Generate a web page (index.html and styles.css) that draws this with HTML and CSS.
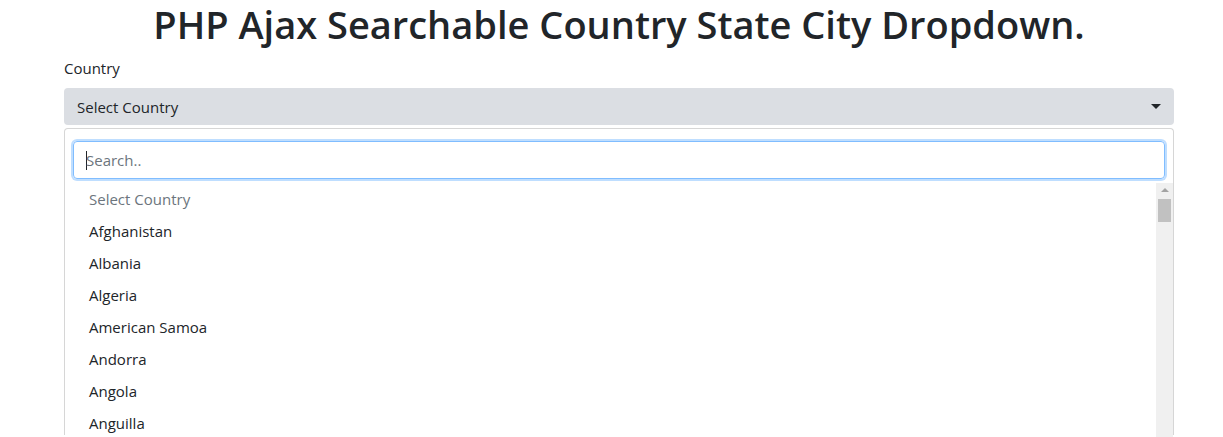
FILE: index.html
```html
<!DOCTYPE html>
<html lang="en">
<head>
<meta charset="utf-8">
<title>PHP Ajax Searchable Country State City Dropdown</title>
<link rel="stylesheet" href="styles.css">
</head>
<body>
<div class="container">
  <h1 class="title">PHP Ajax Searchable Country State City Dropdown.</h1>
  <div class="form-group">
    <label class="label">Country</label>
    <div class="select">
      <span class="select-text">Select Country</span>
      <span class="caret"></span>
    </div>
    <div class="panel">
      <div class="search-wrap">
        <div class="search"><span class="cursor"></span><span class="placeholder">Search..</span></div>
      </div>
      <div class="list-wrap">
        <ul class="list">
          <li class="item muted">Select Country</li>
          <li class="item">Afghanistan</li>
          <li class="item">Albania</li>
          <li class="item">Algeria</li>
          <li class="item">American Samoa</li>
          <li class="item">Andorra</li>
          <li class="item">Angola</li>
          <li class="item">Anguilla</li>
        </ul>
        <div class="scrollbar">
          <span class="arrow-up"></span>
          <span class="thumb"></span>
        </div>
      </div>
    </div>
  </div>
</div>
</body>
</html>
```

FILE: styles.css
```css
html, body {
  margin: 0;
  padding: 0;
  height: 100%;
  overflow: hidden;
  background: #fff;
}
body {
  font-family: "Open Sans", "Noto Sans", sans-serif;
  color: #212529;
  font-size: 15px;
}
.container {
  width: 1110px;
  margin-left: 64px;
}
.title {
  margin: 0;
  height: 48px;
  font-size: 38px;
  line-height: 48px;
  font-weight: 600;
  text-align: center;
  letter-spacing: 0;
  color: #212529;
}
.form-group {
  margin-top: 8px;
}
.label {
  display: block;
  height: 24px;
  line-height: 24px;
  margin-bottom: 8px;
}
.select {
  height: 37px;
  box-sizing: border-box;
  background: #dbdee3;
  border-radius: 4px;
  display: flex;
  align-items: center;
  justify-content: space-between;
  padding: 0 13px 0 13px;
}
.caret {
  width: 0;
  height: 0;
  border-left: 5px solid transparent;
  border-right: 5px solid transparent;
  border-top: 5px solid #212529;
}
.panel {
  margin-top: 3px;
  border: 1px solid #d6d6d6;
  border-bottom: none;
  border-radius: 4px 4px 0 0;
  height: 306px;
}
.search-wrap {
  padding: 12px 8px 4px 8px;
}
.search {
  height: 38px;
  box-sizing: border-box;
  border: 1px solid #80bdff;
  border-radius: 4px;
  box-shadow: 0 0 0 2px rgba(0, 123, 255, 0.25);
  display: flex;
  align-items: center;
  padding-left: 12px;
}
.cursor {
  width: 1px;
  height: 19px;
  background: #212529;
}
.placeholder {
  color: #6c757d;
  margin-left: -1px;
}
.list-wrap {
  display: flex;
}
.list {
  list-style: none;
  margin: 0;
  padding: 0;
  flex: 1;
}
.item {
  height: 32px;
  line-height: 32px;
  padding-left: 24px;
}
.muted {
  color: #6c757d;
}
.scrollbar {
  width: 17px;
  background: #f0f0f0;
  display: flex;
  flex-direction: column;
  align-items: center;
}
.arrow-up {
  margin-top: 5px;
  width: 0;
  height: 0;
  border-left: 4px solid transparent;
  border-right: 4px solid transparent;
  border-bottom: 4px solid #a3a3a3;
}
.thumb {
  margin-top: 7px;
  width: 13px;
  height: 23px;
  background: #c1c1c1;
}
```
